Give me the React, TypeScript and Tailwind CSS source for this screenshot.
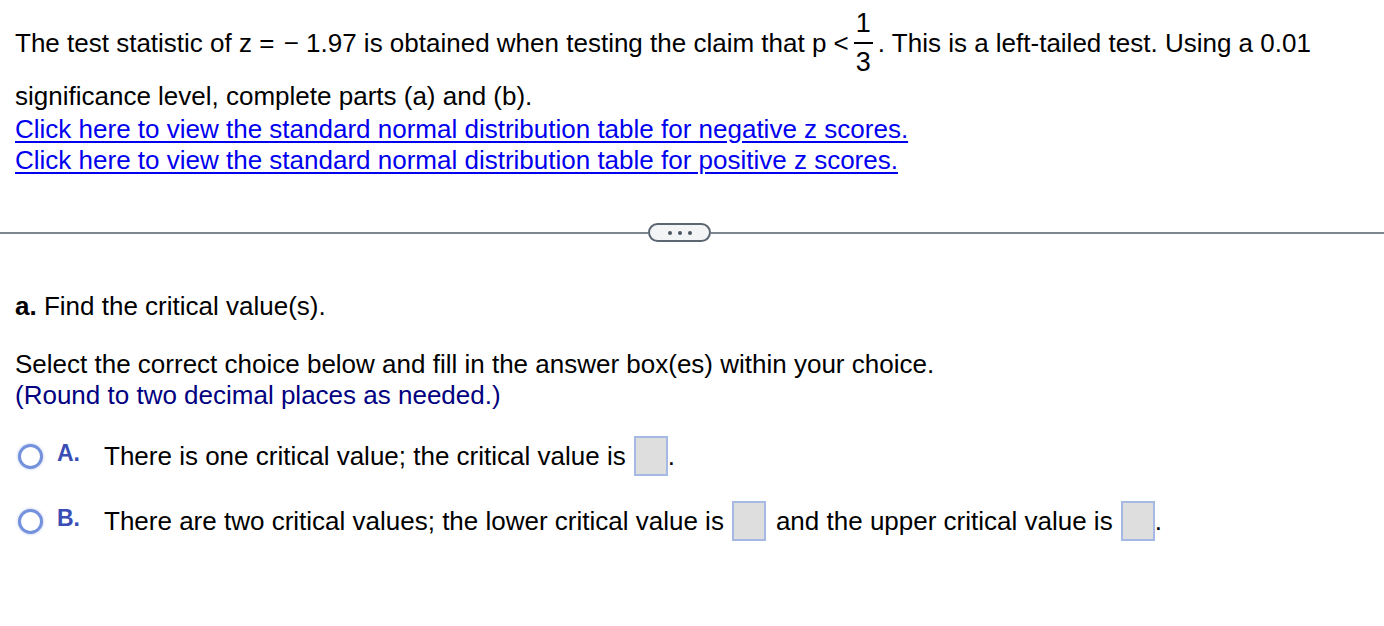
import React from "react";

function Fraction({ num, den }: { num: string; den: string }) {
  return (
    <span className="mx-[5px] inline-flex flex-col items-center text-[27px] leading-none">
      <span className="px-[2px] pb-[5px]">{num}</span>
      <span className="block h-[2px] w-full bg-black" />
      <span className="px-[2px] pt-[5px]">{den}</span>
    </span>
  );
}

function Radio() {
  return (
    <span className="inline-block h-[25px] w-[25px] shrink-0 rounded-full border-[3px] border-[#7391dc] bg-white shadow-[0_0_3px_rgba(90,120,210,0.45)]" />
  );
}

function AnswerBox() {
  return (
    <span className="ml-[8px] mr-[10px] inline-block h-[40px] w-[34px] shrink-0 border-2 border-[#a6b8e4] bg-[#dedede]" />
  );
}

export default function App() {
  return (
    <div className="min-h-[626px] bg-white font-['Liberation_Sans',Arial,sans-serif] text-[26px] text-black">
      <div className="px-[15px] pt-[10px]">
        <div className="flex items-center whitespace-nowrap">
          <span>
            The test statistic of z ={" "}
            <span className="ml-[2px]">− 1.97</span> is obtained when testing the claim that p &lt;
          </span>
          <Fraction num="1" den="3" />
          <span>. This is a left-tailed test. Using a 0.01</span>
        </div>
        <p className="mt-[5px] leading-[31px]">significance level, complete parts (a) and (b).</p>
        <a href="#" className="mt-[2px] block leading-[31px] text-[#0000ee] underline underline-offset-[3px]">
          Click here to view the standard normal distribution table for negative z scores.
        </a>
        <a href="#" className="block leading-[31px] text-[#0000ee] underline underline-offset-[3px]">
          Click here to view the standard normal distribution table for positive z scores.
        </a>
      </div>

      <div className="mt-[47px] flex items-center">
        <div className="h-[2px] w-[648px] bg-[#7d8591]" />
        <div className="flex h-[19px] w-[63px] items-center justify-center gap-[6px] rounded-full border-2 border-[#5c6673] bg-[#f3f4f6]">
          <span className="h-[4px] w-[4px] rounded-full bg-[#4b5563]" />
          <span className="h-[4px] w-[4px] rounded-full bg-[#4b5563]" />
          <span className="h-[4px] w-[4px] rounded-full bg-[#4b5563]" />
        </div>
        <div className="h-[2px] flex-1 bg-[#7d8591]" />
      </div>

      <div className="px-[15px]">
        <p className="mt-[49px] leading-[31px]">
          <b>a.</b> Find the critical value(s).
        </p>
        <p className="mt-[27px] leading-[31px]">
          Select the correct choice below and fill in the answer box(es) within your choice.
        </p>
        <p className="leading-[31px] text-[#000080]">(Round to two decimal places as needed.)</p>

        <div className="mt-[25px] flex flex-col gap-[25px] pl-[3px]">
          <div className="flex items-center">
            <Radio />
            <span className="ml-[14px] w-[47px] self-start text-[23px] font-bold text-[#3a4db5]">A.</span>
            <span>There is one critical value; the critical value is</span>
            <AnswerBox />
            <span className="-ml-[10px]">.</span>
          </div>
          <div className="flex items-center">
            <Radio />
            <span className="ml-[14px] w-[47px] self-start text-[23px] font-bold text-[#3a4db5]">B.</span>
            <span>There are two critical values; the lower critical value is</span>
            <AnswerBox />
            <span>and the upper critical value is</span>
            <AnswerBox />
            <span className="-ml-[10px]">.</span>
          </div>
        </div>
      </div>
    </div>
  );
}
